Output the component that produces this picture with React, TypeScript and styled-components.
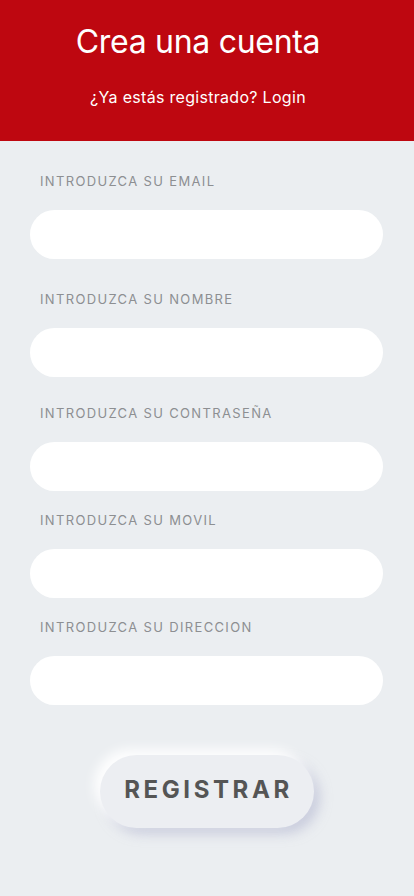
import React from 'react';
import styled, { createGlobalStyle } from 'styled-components';

const GlobalStyle = createGlobalStyle`
    html, body {
        margin: 0;
        padding: 0;
        background-color: #ebeef1;
    }
    * {
        box-sizing: border-box;
    }
`;

const Page = styled.div`
    width: 414px;
    min-height: 896px;
    background-color: #ebeef1;
    font-family: 'Inter', 'Open Sans', sans-serif;
`;

const Header = styled.header`
    height: 141px;
    background-color: #be0710;
    color: #fff;
    display: flex;
    flex-direction: column;
    align-items: center;
    padding: 22px 18px 0 0;
`;

const Title = styled.h1`
    margin: 0;
    font-size: 32px;
    font-weight: 400;
    line-height: 40px;
    letter-spacing: -0.3px;
`;

const Subtitle = styled.p`
    margin: 25px 0 0;
    font-size: 16px;
    font-weight: 400;
    line-height: 20px;
    letter-spacing: 0.3px;
`;

const Form = styled.form`
    display: flex;
    flex-direction: column;
    padding: 0 31px 0 30px;
`;

const Field = styled.div<{ $top: number }>`
    display: flex;
    flex-direction: column;
    margin-top: ${p => p.$top}px;
`;

const Label = styled.label`
    padding-left: 10px;
    font-size: 13px;
    line-height: 16px;
    letter-spacing: 1.35px;
    color: #8d8f92;
    text-transform: uppercase;
`;

const Input = styled.input`
    margin-top: 21px;
    height: 49px;
    width: 100%;
    border: none;
    outline: none;
    border-radius: 25px;
    background-color: #fff;
    padding: 0 20px;
    font-size: 16px;
    font-family: inherit;
`;

const ButtonRow = styled.div`
    display: flex;
    justify-content: center;
    margin-top: 50px;
`;

const Button = styled.button`
    width: 214px;
    height: 73px;
    margin-left: 1px;
    border: none;
    border-radius: 37px;
    background-color: #eceef2;
    color: #555;
    font-family: 'Inter', 'Open Sans', sans-serif;
    font-size: 24px;
    font-weight: 700;
    line-height: 1;
    padding-bottom: 4px;
    letter-spacing: 3.6px;
    text-indent: 3px;
    cursor: pointer;
    box-shadow: -6px -6px 12px rgba(255, 255, 255, 0.95), 6px 6px 12px rgba(174, 178, 205, 0.55);
`;

const fields = [
    { label: 'Introduzca su email', type: 'email', top: 32 },
    { label: 'Introduzca su nombre', type: 'text', top: 32 },
    { label: 'Introduzca su contraseña', type: 'password', top: 28 },
    { label: 'Introduzca su movil', type: 'tel', top: 21 },
    { label: 'Introduzca su direccion', type: 'text', top: 21 },
];

export default function App() {
    return (
        <Page>
            <GlobalStyle />
            <Header>
                <Title>Crea una cuenta</Title>
                <Subtitle>¿Ya estás registrado? Login</Subtitle>
            </Header>
            <Form onSubmit={e => e.preventDefault()}>
                {fields.map(f => (
                    <Field key={f.label} $top={f.top}>
                        <Label>{f.label}</Label>
                        <Input type={f.type} />
                    </Field>
                ))}
                <ButtonRow>
                    <Button type="submit">REGISTRAR</Button>
                </ButtonRow>
            </Form>
        </Page>
    );
}
